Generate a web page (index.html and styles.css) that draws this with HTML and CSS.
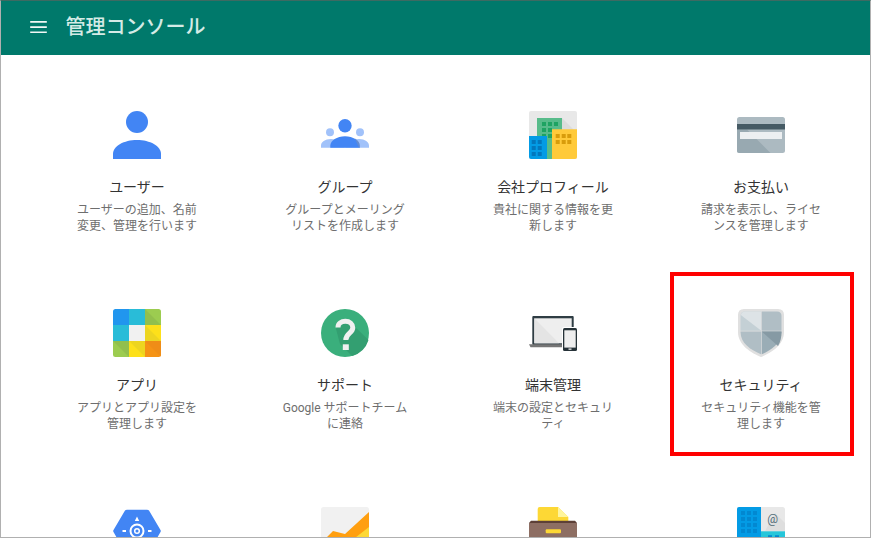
FILE: index.html
```html
<!DOCTYPE html>
<html lang="ja">
<head>
<meta charset="utf-8">
<title>管理コンソール</title>
<link rel="stylesheet" href="styles.css">
</head>
<body>
<div class="app">
  <header class="bar">
    <svg class="menu" viewBox="0 0 16 12" aria-hidden="true"><path d="M0 0h16.500v1.700H0zM0 5.200h16.500v1.700H0zM0 10.400h16.500v1.700H0z"/></svg>
    <h1 class="bar-title">管理コンソール</h1>
  </header>
  <main class="grid">
    <section class="card">
      <svg class="icon" viewBox="0 0 48 48"><circle cx="24" cy="11" r="11" fill="#4285f4"/><path d="M0 48v-5C0 35 11 29 24 29s24 6 24 14v5z" fill="#4285f4"/></svg>
      <h2 class="card-title">ユーザー</h2>
      <p class="card-text">ユーザーの追加、名前変更、管理を行います</p>
    </section>
    <section class="card">
      <svg class="icon" viewBox="0 0 48 48"><circle cx="9" cy="21.300" r="4" fill="#a1c2fa"/><circle cx="39" cy="21.300" r="4" fill="#a1c2fa"/><path d="M0 36.700v-2C0 31 4 28 10 28s10 3 14 8.700zM48 36.700v-2C48 31 44 28 38 28s-10 3-14 8.700z" fill="#a1c2fa"/><circle cx="24" cy="14.700" r="6.700" fill="#4285f4"/><path d="M9.300 36.700v-2c0-5 6.700-9.400 14.700-9.400s14.700 4.400 14.700 9.400v2z" fill="#4285f4"/><path d="M34 27.500c3 1.800 4.700 4.300 4.700 7.200v2H38l-4-9z" fill="#6f8fc4" opacity=".7"/></svg>
      <h2 class="card-title">グループ</h2>
      <p class="card-text">グループとメーリングリストを作成します</p>
    </section>
    <section class="card">
      <svg class="icon" viewBox="0 0 48 48"><rect width="48" height="48" rx="2" fill="#e8e8e8"/><path d="M33 7l15 15v7H33z" fill="#dcdcdc"/><rect x="8" y="7" width="25" height="41" fill="#57bb8a"/><path d="M13 11h4v4h-4zM19 11h4v4h-4zM25 11h4v4h-4zM13 17h4v4h-4zM19 17h4v4h-4zM13 23h4v4h-4zM19 23h4v4h-4z" fill="#1ea362"/><path d="M23 18.300h25V46a2 2 0 0 1-2 2H23z" fill="#ffca3a"/><path d="M26.700 23h4v4h-4zM32.700 23h4v4h-4zM38.300 23h4v4h-4zM26.700 29h4v4h-4zM32.700 29h4v4h-4zM38.300 29h4v4h-4z" fill="#d89c0b"/><path d="M0 25h18v23H2a2 2 0 0 1-2-2z" fill="#039be5"/><path d="M2.700 29h4v4h-4zM8.700 29h4v4h-4zM2.700 35h4v4h-4zM8.700 35h4v4h-4zM2.700 41h4v4h-4zM8.700 41h4v4h-4z" fill="#0277bd"/></svg>
      <h2 class="card-title">会社プロフィール</h2>
      <p class="card-text">貴社に関する情報を更新します</p>
    </section>
    <section class="card">
      <svg class="icon" viewBox="0 0 48 48"><rect y="6" width="48" height="36" rx="2.500" fill="#acbac1"/><path d="M0 18.500h10L33.500 42H2.500A2.500 2.500 0 0 1 0 39.500z" fill="#98a9b1"/><rect y="13" width="48" height="5.500" fill="#455a64"/><rect x="3" y="21" width="42" height="7" fill="#eceff1"/></svg>
      <h2 class="card-title">お支払い</h2>
      <p class="card-text">請求を表示し、ライセンスを管理します</p>
    </section>
    <section class="card">
      <svg class="icon" viewBox="0 0 48 48"><defs><clipPath id="round"><rect width="48" height="48" rx="2.500"/></clipPath></defs><g clip-path="url(#round)"><rect width="16" height="16" fill="#2196ee"/><rect x="16" width="16" height="16" fill="#29bcd8"/><rect x="32" width="16" height="16" fill="#9ccc50"/><path d="M32 0l16 16H32z" fill="#91bf4d"/><rect y="16" width="16" height="16" fill="#29bcd8"/><rect x="16" y="16" width="16" height="16" fill="#f1f1f1"/><rect x="32" y="16" width="16" height="16" fill="#fde01a"/><path d="M32 16l16 16H32z" fill="#edd520"/><rect y="32" width="16" height="16" fill="#9ccc50"/><path d="M0 32l16 16V32z" fill="#91bf4d"/><rect x="16" y="32" width="16" height="16" fill="#fde01a"/><path d="M16 32l16 16V32z" fill="#edd520"/><rect x="32" y="32" width="16" height="16" fill="#f59315"/><path d="M32 32l16 16V32z" fill="#ef8d17"/></g></svg>
      <h2 class="card-title">アプリ</h2>
      <p class="card-text">アプリとアプリ設定を管理します</p>
    </section>
    <section class="card">
      <svg class="icon" viewBox="0 0 48 48"><circle cx="24" cy="24" r="24" fill="#3aaf7c"/><path d="M15 20c4-8 9-10 11-10l21.500 21A24 24 0 0 1 31 47L19 35z" fill="#339f71"/><path d="M17 18.500C17 14.500 20.200 12.300 24.300 12.300C28.600 12.300 31.800 15 31.800 18.800C31.800 24.300 24.800 24.300 24.800 31" fill="none" stroke="#f0f0f0" stroke-width="5"/><rect x="21.800" y="35.300" width="6" height="5.700" fill="#f0f0f0"/></svg>
      <h2 class="card-title">サポート</h2>
      <p class="card-text">Google サポートチームに連絡</p>
    </section>
    <section class="card">
      <svg class="icon" viewBox="0 0 48 48"><rect x="3.300" y="7" width="41.400" height="29" rx="1" fill="#2f3d44"/><rect x="5.300" y="9.300" width="37.400" height="25" fill="#eee"/><path d="M5.300 9.300L30 34.300H5.300z" fill="#e4e4e4"/><path d="M0 35.300h40v3H1.500z" fill="#757575"/><rect x="33" y="18" width="16" height="25" rx="2" fill="#fff"/><rect x="34" y="19" width="14" height="23" rx="1.500" fill="#263238"/><rect x="35.300" y="21.300" width="11.400" height="17.300" fill="#eee"/><rect x="39.500" y="39.500" width="3" height="1.300" fill="#eee"/></svg>
      <h2 class="card-title">端末管理</h2>
      <p class="card-text">端末の設定とセキュリティ</p>
    </section>
    <section class="card">
      <svg class="icon" viewBox="0 0 48 48"><path d="M1 6Q1 0 7 0h34Q47 0 47 6V23C47 36 34 44 24 48C14 44 1 36 1 23z" fill="#e0e0e0"/><path d="M3.500 7Q3.500 2.500 8 2.500h16v19.200H3.500z" fill="#c4d0d5"/><path d="M3.800 6Q4.500 2.500 8 2.500h16v19z" fill="#dde3e6"/><path d="M24.700 2.500H40Q44.500 2.500 44.500 7v14.700H24.700z" fill="#b0bec5"/><path d="M3.500 22.400H24V45.300C14 41 3.500 34.500 3.500 23z" fill="#b0bec5"/><path d="M24.700 22.400h19.800V23C44.500 34.500 34 41 24.700 45.300z" fill="#9aadb6"/><path d="M24.700 22.400h19.800V23C44.500 28 43.500 33 41 37z" fill="#869aa4"/></svg>
      <h2 class="card-title">セキュリティ</h2>
      <p class="card-text">セキュリティ機能を管理します</p>
    </section>
    <section class="card">
      <svg class="icon" viewBox="0 0 48 48"><path d="M12 3.500Q12.600 2.700 14 2.700h20q1.400 0 2 .8L47.500 23q.6 1 0 2L36 45H12L.5 25q-.6-1 0-2z" fill="#4285f4"/><path d="M24 9.500l2.200 4.500h-4.400zM9.500 23H13v2H9.500zM35 23h3.500v2H35z" fill="#fff"/><circle cx="24" cy="24" r="6.500" fill="none" stroke="#fff" stroke-width="2"/><circle cx="24" cy="24" r="2.300" fill="none" stroke="#fff" stroke-width="1.500"/></svg>
    </section>
    <section class="card">
      <svg class="icon" viewBox="0 0 48 48"><rect width="48" height="48" rx="2.500" fill="#f1f1f1"/><path d="M48 5L24 27l-12-3L0 36v12h48z" fill="#ff9f10"/><path d="M48 20L30 34V48H48z" fill="#fdd835"/></svg>
    </section>
    <section class="card">
      <svg class="icon" viewBox="0 0 48 48"><path d="M8.700 2q0-2 2-2h18.300l10.300 10v4H8.700z" fill="#fdd835"/><path d="M29 0l10.300 10H29z" fill="#fff59d"/><path d="M2 13.700h44l2 2.300H0z" fill="#5d4037"/><rect y="16" width="48" height="32" fill="#8d6e63"/><rect x="16.700" y="22.300" width="15.300" height="4" rx="1" fill="#fdd835"/></svg>
    </section>
    <section class="card">
      <svg class="icon" viewBox="0 0 48 48"><rect width="48" height="48" rx="2.500" fill="#e8e8e8"/><path d="M38 6l10 10v8H28z" fill="#dedede"/><rect y="24.300" x="24" width="24" height="24" fill="#26c6da"/><path d="M2 0h22v48H0V2a2 2 0 0 1 2-2z" fill="#039be5"/><path d="M4 4h4v4H4zM10 4h4v4h-4zM16 4h4v4h-4zM4 10h4v4H4zM10 10h4v4h-4zM16 10h4v4h-4zM4 16h4v4H4zM10 16h4v4h-4zM16 16h4v4h-4zM4 22h4v4H4zM10 22h4v4h-4zM16 22h4v4h-4z" fill="#0288d1"/><text class="at" x="35.700" y="16" text-anchor="middle">@</text><path d="M31 28.300h4v4h-4zM38 28.300h4v4h-4z" fill="#0288d1"/></svg>
    </section>
  </main>
  <div class="highlight"></div>
</div>
</body>
</html>
```
FILE: styles.css
```css
* { box-sizing: border-box; }
html, body { margin: 0; padding: 0; background: #fff; }
body {
  width: 871px;
  height: 538px;
  overflow: hidden;
  font-family: Roboto, "Noto Sans CJK JP", sans-serif;
}
.app {
  position: relative;
  width: 871px;
  height: 538px;
  overflow: hidden;
  border: 1px solid #b0b0b0;
  border-top: 1px solid #3e6a62;
}
.bar {
  height: 54px;
  background: #00796b;
  display: flex;
  align-items: center;
  padding: 0 0 2px 29px;
}
.menu {
  width: 16.500px;
  height: 12.100px;
  fill: #f1f8f6;
}
.bar-title {
  margin: 0 0 0 19px;
  font-size: 20px;
  font-weight: 500;
  color: #d5ebe6;
  line-height: 28px;
  white-space: nowrap;
}
.grid {
  display: grid;
  grid-template-columns: repeat(4, 208px);
  grid-auto-rows: 198px;
  padding: 56px 0 0 32px;
}
.card {
  display: flex;
  flex-direction: column;
  align-items: center;
  text-align: center;
}
.icon {
  width: 48px;
  height: 48px;
  flex: none;
}
.card-title {
  margin: 18px 0 0;
  font-size: 14px;
  font-weight: 400;
  line-height: 20px;
  color: #333;
}
.card-text {
  margin: 5px 0 0;
  width: 128px;
  font-size: 12px;
  line-height: 16px;
  color: #6e6e6e;
}
.at {
  font-family: Roboto, sans-serif;
  font-size: 12px;
  fill: #546e7a;
}
.highlight {
  position: absolute;
  left: 669px;
  top: 271px;
  width: 184px;
  height: 184px;
  border: 4px solid #f00;
}
```
